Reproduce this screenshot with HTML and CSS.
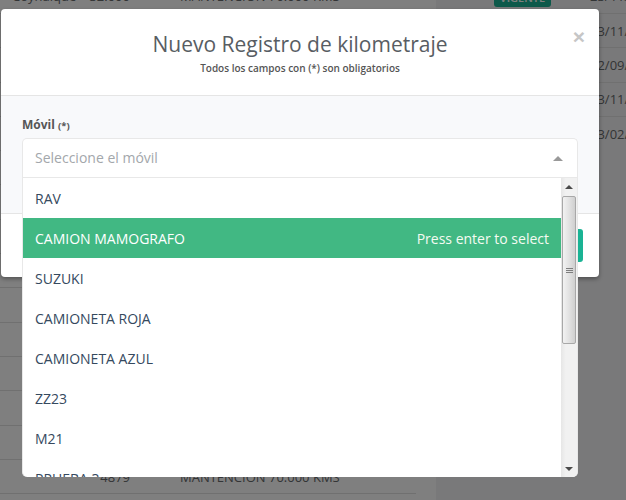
FILE: index.html
```html
<!DOCTYPE html>
<html lang="es">
<head>
<meta charset="utf-8">
<title>Nuevo Registro de kilometraje</title>
<link rel="stylesheet" href="styles.css">
</head>
<body>
<div class="page">
  <div class="tbl-left">
    <div class="row"><span class="c1">Coyhaique</span><span class="c2">32.000</span><span class="c3">MANTENCION 70.000 KMS</span></div>
    <div class="row"></div>
    <div class="row"></div>
    <div class="row"></div>
    <div class="row"></div>
    <div class="row"></div>
    <div class="row"></div>
    <div class="row"></div>
    <div class="row"></div>
    <div class="row"></div>
    <div class="row"></div>
    <div class="row"></div>
    <div class="row"></div>
    <div class="row"></div>
    <div class="row"><span class="c1"></span><span class="c2">4879</span><span class="c3">MANTENCION 70.000 KMS</span></div>
  </div>
  <div class="tbl-right">
    <div class="rrow"><span class="badge">VIGENTE</span><span class="date">23/11/2022</span></div>
    <div class="rrow"><span class="nobadge"></span><span class="date">13/11/2022</span></div>
    <div class="rrow"><span class="nobadge"></span><span class="date">22/09/2022</span></div>
    <div class="rrow"><span class="nobadge"></span><span class="date">13/11/2022</span></div>
    <div class="rrow last"><span class="nobadge"></span><span class="date">13/02/2023</span></div>
  </div>
</div>

<div class="backdrop"></div>

<div class="modal">
  <div class="modal-header">
    <button class="close" type="button">×</button>
    <h4 class="modal-title">Nuevo Registro de kilometraje</h4>
    <small class="subtitle">Todos los campos con (*) son obligatorios</small>
  </div>
  <div class="modal-body">
    <label class="field-label">Móvil <small>(*)</small></label>
    <div class="multiselect">
      <div class="ms-tags">
        <span class="ms-placeholder">Seleccione el móvil</span>
        <span class="ms-arrow"></span>
      </div>
      <div class="ms-content">
        <ul class="ms-list">
          <li class="ms-option">RAV</li>
          <li class="ms-option highlight"><span>CAMION MAMOGRAFO</span><span class="ms-hint">Press enter to select</span></li>
          <li class="ms-option">SUZUKI</li>
          <li class="ms-option">CAMIONETA ROJA</li>
          <li class="ms-option">CAMIONETA AZUL</li>
          <li class="ms-option">ZZ23</li>
          <li class="ms-option">M21</li>
          <li class="ms-option">PRUEBA 3</li>
        </ul>
        <div class="sb">
          <div class="sb-btn"><span class="tri-up"></span></div>
          <div class="sb-thumb"><span class="grip"></span><span class="grip"></span><span class="grip"></span></div>
          <div class="sb-space"></div>
          <div class="sb-btn"><span class="tri-down"></span></div>
        </div>
      </div>
    </div>
  </div>
  <div class="modal-footer">
    <button class="btn-primary" type="button">Guardar</button>
  </div>
</div>
</body>
</html>
```
FILE: styles.css
```css
* { box-sizing: border-box; }
html, body { margin: 0; padding: 0; }
body {
  width: 626px;
  height: 500px;
  overflow: hidden;
  position: relative;
  font-family: "Open Sans", "Liberation Sans", sans-serif;
  background: #f3f3f4;
  color: #676a6c;
}

/* background page */
.page { display: flex; height: 500px; }
.tbl-left {
  flex: none;
  width: 436px;
  background: #fff;
  padding-right: 20px;
  margin-top: -20.3px;
}
.row {
  height: 34.3px;
  border-bottom: 1px solid #e0e0e0;
  display: flex;
  align-items: center;
  font-size: 13px;
  white-space: nowrap;
}
.c1 { flex: none; width: 78px; padding-left: 12px; }
.c2 { flex: none; width: 52px; text-align: right; }
.c3 { margin-left: 50px; }
.tbl-right {
  flex: 1;
  min-width: 0;
  overflow: hidden;
  margin-top: -20.3px;
}
.rrow {
  height: 34.3px;
  border-bottom: 1px solid #e0e0e0;
  display: flex;
  align-items: center;
  font-size: 13px;
  white-space: nowrap;
}
.rrow.last { border-bottom: none; }
.badge {
  flex: none;
  margin-left: 58px;
  width: 57px;
  height: 19px;
  margin-top: 2px;
  background: #1ab394;
  color: #fff;
  border-radius: 3px;
  font-size: 11px;
  font-weight: 600;
  display: flex;
  align-items: center;
  justify-content: center;
}
.nobadge { flex: none; margin-left: 58px; width: 57px; }
.date { flex: none; margin-left: 39px; }

.backdrop {
  position: absolute;
  inset: 0;
  background: rgba(0, 0, 0, 0.5);
}

/* modal */
.modal {
  position: absolute;
  top: 9px;
  left: 1px;
  width: 598px;
  background: #fff;
  border-radius: 4px;
  box-shadow: 0 2px 4px rgba(0, 0, 0, 0.35);
}
.modal-header {
  position: relative;
  height: 87px;
  padding-top: 22px;
  border-bottom: 1px solid #e5e5e5;
  text-align: center;
}
.close {
  position: absolute;
  top: 17px;
  right: 14px;
  border: 0;
  background: none;
  padding: 0;
  font-family: "Liberation Sans", sans-serif;
  font-size: 21px;
  font-weight: bold;
  line-height: 1;
  color: #c6c6c6;
}
.modal-title {
  margin: 0;
  font-size: 21px;
  line-height: 26px;
  font-weight: 400;
  color: #585d63;
}
.subtitle {
  display: block;
  margin-top: 5px;
  font-size: 10px;
  line-height: 12px;
  font-weight: 600;
  color: #555;
}

.modal-body {
  background: #f8f9fb;
  padding: 21px 21px 35px;
}
.field-label {
  display: block;
  font-size: 12px;
  line-height: 15px;
  font-weight: 700;
  color: #565656;
  margin-bottom: 5px;
}
.field-label small { font-size: 9.5px; }

.multiselect { position: relative; }
.ms-tags {
  height: 40px;
  background: #fff;
  border: 1px solid #e8e8e8;
  border-bottom: none;
  border-radius: 5px 5px 0 0;
  padding: 0 14px 0 12px;
  display: flex;
  align-items: center;
  justify-content: space-between;
}
.ms-placeholder {
  font-size: 14px;
  line-height: 18px;
  margin-top: -2px;
  color: #a3a7ab;
}
.ms-arrow {
  width: 0;
  height: 0;
  border-left: 5px solid transparent;
  border-right: 5px solid transparent;
  border-bottom: 5px solid #999;
  margin-top: -1px;
}
.ms-content {
  position: absolute;
  top: 39px;
  left: 0;
  right: 0;
  height: 300px;
  background: #fff;
  border: 1px solid #e8e8e8;
  border-bottom: none;
  border-radius: 0 0 5px 5px;
  display: flex;
  overflow: hidden;
  z-index: 5;
}
.ms-list {
  flex: 1;
  margin: 0;
  padding: 0;
  list-style: none;
}
.ms-option {
  height: 40px;
  padding: 0 12px;
  display: flex;
  align-items: center;
  justify-content: space-between;
  font-size: 14px;
  color: #35495e;
  white-space: nowrap;
}
.ms-option.highlight { background: #41b883; color: #fff; }
.ms-hint { font-size: 14px; color: #f4fbf2; }

/* scrollbar */
.sb {
  width: 16px;
  background: linear-gradient(to right, #e6e6e6, #f1f1f1 30%, #f1f1f1);
  display: flex;
  flex-direction: column;
  align-items: center;
}
.sb-btn {
  height: 17px;
  width: 100%;
  display: flex;
  align-items: center;
  justify-content: center;
}
.tri-up, .tri-down {
  width: 0;
  height: 0;
  border-left: 4px solid transparent;
  border-right: 4px solid transparent;
}
.tri-up { border-bottom: 4px solid #4a4a4a; }
.tri-down { border-top: 4px solid #4a4a4a; }
.sb-thumb {
  width: 14px;
  height: 148px;
  margin-top: 1px;
  border: 1px solid #a8a8a8;
  border-radius: 2px;
  background: linear-gradient(to right, #f2f2f2, #e2e2e2 50%, #cfcfcf);
  display: flex;
  flex-direction: column;
  align-items: center;
  justify-content: center;
  gap: 1px;
}
.grip {
  width: 7px;
  height: 1px;
  background: #7d7d7d;
}
.sb-space { flex: 1; }

.modal-footer {
  border-top: 1px solid #e5e5e5;
  padding: 15px 16px;
  display: flex;
  justify-content: flex-end;
}
.btn-primary {
  height: 33px;
  width: 80px;
  border: 0;
  border-radius: 3px;
  background: #1ab394;
  color: #fff;
  font-family: "Open Sans", sans-serif;
  font-size: 13px;
}
```
